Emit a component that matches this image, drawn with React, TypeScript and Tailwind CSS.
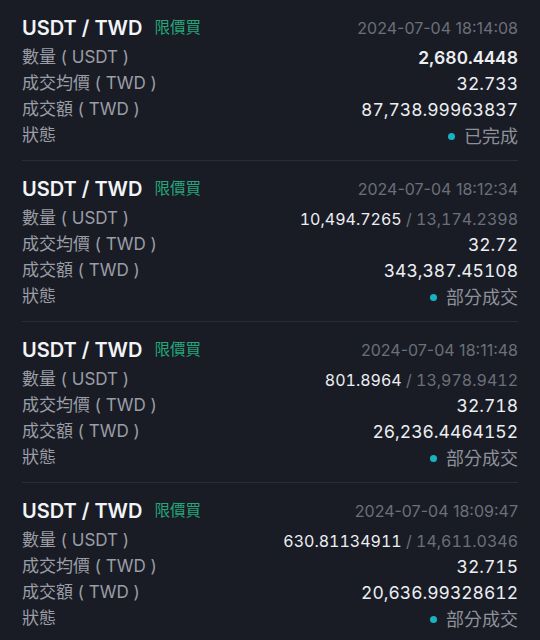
import React from "react";

type Order = {
  time: string;
  filled: string;
  total?: string;
  avg: string;
  amount: string;
  status: string;
  bold?: boolean;
};

const orders: Order[] = [
  { time: "2024-07-04 18:14:08", filled: "2,680.4448", avg: "32.733", amount: "87,738.99963837", status: "已完成", bold: true },
  { time: "2024-07-04 18:12:34", filled: "10,494.7265", total: "13,174.2398", avg: "32.72", amount: "343,387.45108", status: "部分成交" },
  { time: "2024-07-04 18:11:48", filled: "801.8964", total: "13,978.9412", avg: "32.718", amount: "26,236.4464152", status: "部分成交" },
  { time: "2024-07-04 18:09:47", filled: "630.81134911", total: "14,611.0346", avg: "32.715", amount: "20,636.99328612", status: "部分成交" },
];

const FONT = { fontFamily: 'Inter, "Noto Sans CJK TC", sans-serif' };

function Row({ label, children, small }: { label: string; children: React.ReactNode; small?: boolean }) {
  return (
    <div className="flex h-[26px] items-center justify-between">
      <span className="text-[17px] text-[#9b9ea6]">{label}</span>
      <div className={`flex items-center tabular-nums text-[#eceef2] ${small ? "text-[16px]" : "text-[17.5px]"}`}>
        {children}
      </div>
    </div>
  );
}

function Card({ o, last }: { o: Order; last: boolean }) {
  return (
    <div className="px-[22px]">
      <div className={`pt-[12px] pb-[11px] ${last ? "" : "border-b border-[#2a2d37]"}`}>
        <div className="flex h-[33px] items-center justify-between pb-[1px]">
          <div className="flex items-center gap-[12px]">
            <span className="text-[20px] font-semibold text-[#f3f4f6]">USDT / TWD</span>
            <span className="text-[15.5px] text-[#23a67b]">限價買</span>
          </div>
          <span className="text-[16px] text-[#6c6f79]">{o.time}</span>
        </div>
        <Row label="數量 ( USDT )" small={!!o.total}>
          {o.bold ? (
            <span className="font-semibold">{o.filled}</span>
          ) : (
            <span>{o.filled}</span>
          )}
          {o.total && <span className="whitespace-pre text-[#6c6f79]"> / {o.total}</span>}
        </Row>
        <Row label="成交均價 ( TWD )">
          <span>{o.avg}</span>
        </Row>
        <Row label="成交額 ( TWD )">
          <span>{o.amount}</span>
        </Row>
        <Row label="狀態">
          <span className="mr-[9px] inline-block h-[7px] w-[7px] rounded-full bg-[#17b4c0]" />
          <span className="text-[18px] text-[#8e919a]">{o.status}</span>
        </Row>
      </div>
    </div>
  );
}

export default function App() {
  return (
    <div className="h-[640px] w-[540px] overflow-hidden bg-[#191c25]" style={FONT}>
      {orders.map((o, i) => (
        <Card key={i} o={o} last={i === orders.length - 1} />
      ))}
    </div>
  );
}
